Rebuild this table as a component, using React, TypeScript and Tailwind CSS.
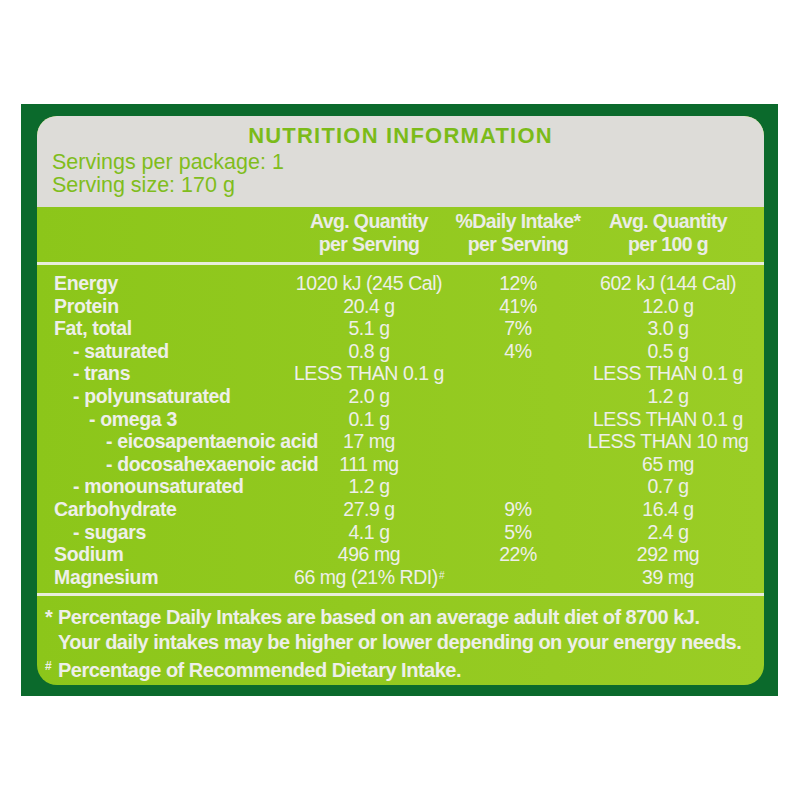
// Nutrition information panel

type Row = {
  label: string
  indent: number
  serving: string
  daily: string
  per100: string
  sup?: boolean
}

const ROWS: Row[] = [
  { label: 'Energy', indent: 0, serving: '1020 kJ (245 Cal)', daily: '12%', per100: '602 kJ (144 Cal)' },
  { label: 'Protein', indent: 0, serving: '20.4 g', daily: '41%', per100: '12.0 g' },
  { label: 'Fat, total', indent: 0, serving: '5.1 g', daily: '7%', per100: '3.0 g' },
  { label: '- saturated', indent: 1, serving: '0.8 g', daily: '4%', per100: '0.5 g' },
  { label: '- trans', indent: 1, serving: 'LESS THAN 0.1 g', daily: '', per100: 'LESS THAN 0.1 g' },
  { label: '- polyunsaturated', indent: 1, serving: '2.0 g', daily: '', per100: '1.2 g' },
  { label: '- omega 3', indent: 2, serving: '0.1 g', daily: '', per100: 'LESS THAN 0.1 g' },
  { label: '- eicosapentaenoic acid', indent: 3, serving: '17 mg', daily: '', per100: 'LESS THAN 10 mg' },
  { label: '- docosahexaenoic acid', indent: 3, serving: '111 mg', daily: '', per100: '65 mg' },
  { label: '- monounsaturated', indent: 1, serving: '1.2 g', daily: '', per100: '0.7 g' },
  { label: 'Carbohydrate', indent: 0, serving: '27.9 g', daily: '9%', per100: '16.4 g' },
  { label: '- sugars', indent: 1, serving: '4.1 g', daily: '5%', per100: '2.4 g' },
  { label: 'Sodium', indent: 0, serving: '496 mg', daily: '22%', per100: '292 mg' },
  { label: 'Magnesium', indent: 0, serving: '66 mg (21% RDI)', daily: '', per100: '39 mg', sup: true },
]

const INDENT = ['pl-[17px]', 'pl-[36px]', 'pl-[52px]', 'pl-[69px]']

const GRID = 'grid grid-cols-[250px_164px_134px_166px]'

export default function App() {
  return (
    <div className="w-[800px] h-[800px] bg-white pt-[104px] pl-[21px] font-['Liberation_Sans',Arial,sans-serif]">
      <div className="w-[757px] h-[592px] bg-[#0b6a2c] pt-[12px] pl-[16px]">
        <div className="w-[727px] h-[569px] rounded-[20px] overflow-hidden flex flex-col bg-gradient-to-r from-[#8cc61a] to-[#9acd25]">
          {/* Title block */}
          <div className="h-[91px] bg-[#dddcd8] pt-[8px] pl-[15px]">
            <div className="text-center pr-[15px] text-[22px] leading-[24px] font-bold tracking-[1.2px] text-[#7bbb19]">
              NUTRITION INFORMATION
            </div>
            <div className="mt-[3px] text-[21.5px] leading-[23px] text-[#80bd1c]">
              <div>Servings per package: 1</div>
              <div>Serving size: 170 g</div>
            </div>
          </div>

          {/* Column headings */}
          <div className={`${GRID} h-[55px] pt-[3px] text-[19.5px] leading-[23px] font-bold tracking-[-0.6px] text-[#ebece6]`}>
            <div />
            <div className="text-center">Avg. Quantity<br />per Serving</div>
            <div className="text-center">%Daily Intake*<br />per Serving</div>
            <div className="text-center">Avg. Quantity<br />per 100 g</div>
          </div>
          <div className="h-[3px] bg-[#e9eddc]" />

          {/* Rows */}
          <div className="h-[328px] pt-[7px] text-[19.5px] leading-[22.6px] text-[#eeefe9]">
            {ROWS.map((r) => (
              <div key={r.label} className={GRID}>
                <div className={`${INDENT[r.indent]} font-bold tracking-[-0.35px] whitespace-nowrap`}>{r.label}</div>
                <div className="text-center tracking-[-0.45px] whitespace-nowrap">
                  {r.serving}
                  {r.sup && <sup className="text-[10px] ml-[1px]">#</sup>}
                </div>
                <div className="text-center tracking-[-0.45px]">{r.daily}</div>
                <div className="text-center tracking-[-0.45px] whitespace-nowrap">{r.per100}</div>
              </div>
            ))}
          </div>
          <div className="h-[3px] bg-[#e9eddc]" />

          {/* Footnotes */}
          <div className="flex-1 pt-[9px] pl-[8px] text-[20px] leading-[25px] font-bold tracking-[-0.5px] text-[#eeefe9]">
            <div className="flex">
              <span className="w-[13px] shrink-0">*</span>
              <span>
                Percentage Daily Intakes are based on an average adult diet of 8700 kJ.
                <br />
                Your daily intakes may be higher or lower depending on your energy needs.
              </span>
            </div>
            <div className="flex mt-[3px]">
              <span className="w-[13px] shrink-0 text-[12px] leading-[16px]">#</span>
              <span>Percentage of Recommended Dietary Intake.</span>
            </div>
          </div>
        </div>
      </div>
    </div>
  )
}
